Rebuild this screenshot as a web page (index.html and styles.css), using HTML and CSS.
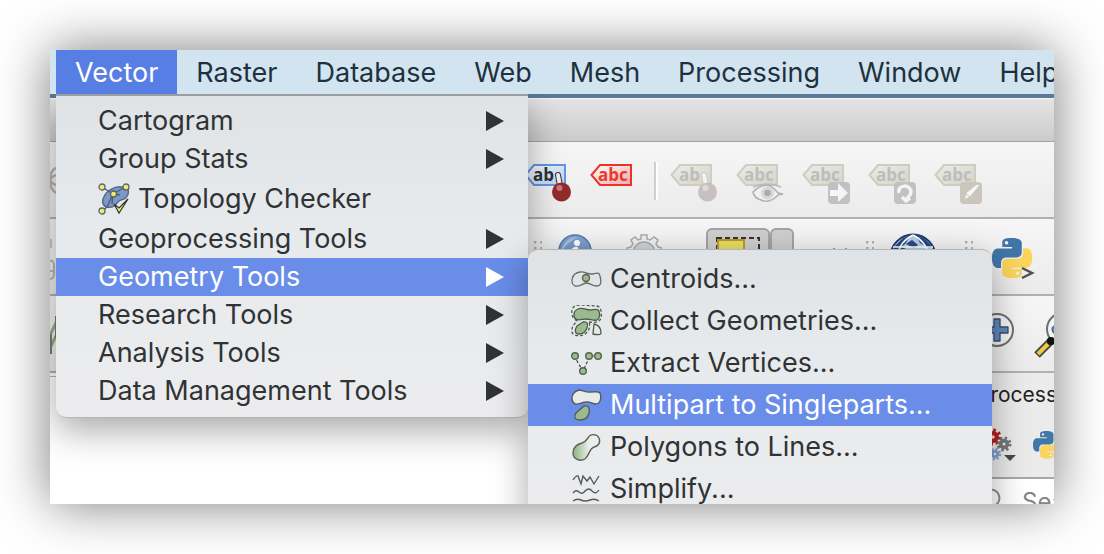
FILE: index.html
```html
<!DOCTYPE html>
<html lang="en">
<head>
<meta charset="utf-8">
<title>Vector menu</title>
<link rel="stylesheet" href="styles.css">
</head>
<body>
<svg class="defs" aria-hidden="true">
  <defs>
    <linearGradient id="g-blue" x2="1" y2="1"><stop stop-color="#fff"/><stop offset="1" stop-color="#b4cbee"/></linearGradient>
    <linearGradient id="g-red" x2="1" y2="1"><stop stop-color="#fff"/><stop offset="1" stop-color="#f3a9a9"/></linearGradient>
    <linearGradient id="g-grey" x2="1" y2="1"><stop stop-color="#ececea"/><stop offset="1" stop-color="#d5d4c8"/></linearGradient>
    <linearGradient id="g-poly"><stop offset=".1" stop-color="#9bbb8f"/><stop offset=".6" stop-color="#eceded"/></linearGradient>
    <linearGradient id="g-info" y2="1" x2="0"><stop stop-color="#86a5d0"/><stop offset="1" stop-color="#5e83b8"/></linearGradient>
    <path id="snake" d="M14.25.18l.9.2.73.26.59.3.45.32.34.34.25.34.16.33.1.3.04.26.02.2-.01.13V8.5l-.05.63-.13.55-.21.46-.26.38-.3.31-.33.25-.35.19-.35.14-.33.1-.3.07-.26.04-.21.02H8.77l-.69.05-.59.14-.5.22-.41.27-.33.32-.27.35-.2.36-.15.37-.1.35-.07.32-.04.27-.02.21v3.06H3.17l-.21-.03-.28-.07-.32-.12-.35-.18-.36-.26-.36-.36-.35-.46-.32-.59-.28-.73-.21-.88-.14-1.05-.05-1.23.06-1.22.16-1.04.24-.87.32-.71.36-.57.4-.44.42-.33.42-.24.4-.16.36-.1.32-.05.24-.01h.16l.06.01h8.16v-.83H6.18l-.01-2.75-.02-.37.05-.34.11-.31.17-.28.25-.26.31-.23.38-.2.44-.18.51-.15.58-.12.64-.1.71-.06.77-.04.84-.02 1.27.05zm-6.3 1.98l-.23.33-.08.41.08.41.23.34.33.22.41.09.41-.09.33-.22.23-.34.08-.41-.08-.41-.23-.33-.33-.22-.41-.09-.41.09z"/>
    <g id="python"><use href="#snake" fill="#4076a8"/><use href="#snake" fill="#fbd45c" transform="rotate(180 12 12)"/></g>
    <path id="tag" d="M1.5 13 10 3H41V23H10Z" stroke-width="2"/>
    <g id="greytag"><use href="#tag" fill="url(#g-grey)" stroke="#cfccc0"/></g>
    <path id="badge" d="M30 20h14q4 0 4 4v14q0 4-4 4H30q-4 0-4-4V24q0-4 4-4z"/>
    <g id="teeth"><circle r="4.500" fill="none" stroke="currentColor" stroke-width="5"/><circle r="8" fill="none" stroke="currentColor" stroke-width="4" stroke-dasharray="3.140 3.140"/></g>
  </defs>
</svg>

<div class="window">
  <nav class="menubar" aria-label="Application menu">
    <div class="menubar-entry">
      <button class="menubar-item active" aria-expanded="true">Vector</button>
      <ul class="menu vector-menu">
        <li><button class="menu-item">Cartogram<span class="arrow"></span></button></li>
        <li><button class="menu-item">Group Stats<span class="arrow"></span></button></li>
        <li><button class="menu-item with-icon">
          <svg width="32" height="32" viewBox="0 0 32 32"><path d="M6 14C8 8 17 3 23 4c3 0 6-2 7 1 1 5 0 9-4 11-4 1-5 1-7 4-3 4-6 5-10 4-5-1-5-7-3-10z" fill="#7e98c5" stroke="#596b87" stroke-width="1.5"/><path d="M4 4l11 7 12-7M15 11 9 24 4 28M15 11l-1 10M15 11l7 1" fill="none" stroke="#4e5e76" stroke-width="1.4"/><g fill="#f4ec62" stroke="#56657a" stroke-width="1.3"><circle cx="4" cy="4" r="3"/><circle cx="28" cy="4" r="3"/><circle cx="15.500" cy="11" r="3"/><circle cx="4" cy="28" r="3"/></g><path d="M16 21l5 4 9-9-9 14z" fill="#f4ec62" stroke="#30343a" stroke-width="1.2"/></svg>
          Topology Checker</button></li>
        <li><button class="menu-item">Geoprocessing Tools<span class="arrow"></span></button></li>
        <li class="submenu-host"><button class="menu-item selected" aria-expanded="true">Geometry Tools<span class="arrow"></span></button>
          <ul class="menu geometry-menu">
            <li><button class="menu-item with-icon">
              <svg width="31" height="32" viewBox="0 0 31 32"><path d="M9 9c4-1 7 2 11 2 4 0 8-3 9 2 2 8 0 10-3 10-5 0-7-3-11-3-4 1-7 4-11 3C-1 21 0 10 9 9z" fill="none" stroke="#666b68" stroke-width="1.3"/><circle cx="15" cy="15" r="3.500" fill="#9bbb8f" stroke="#53614f" stroke-width="1.4"/></svg>
              Centroids...</button></li>
            <li><button class="menu-item with-icon">
              <svg width="31" height="32" viewBox="0 0 31 32"><g stroke="#4c5b4b" stroke-width="1.3"><path d="M7 4c4-2 8 1 12 1s8-2 9 1 1 8-2 9-7-1-11-1-7 2-10 0S2 6 7 4z" fill="#9bbb8f"/><path d="M12 17c5-1 5 3 4 6s-4 6-8 6c-5 0-4-5-2-8z" fill="#9bbb8f"/><path d="M23 19c5 1 7 4 7 9 0 2-4 2-8 1z" fill="none"/><path d="M18 17c6 1 11 0 12-4 1-6 0-11-4-12-5 0-9-1-17-1C3 0 0 3 1 9c0 4 3 5 5 7-4 4-7 9-4 13 5 3 12 2 15-3 2-3 2-6 1-9z" fill="none" stroke-dasharray="3 2"/></g></svg>
              Collect Geometries...</button></li>
            <li><button class="menu-item with-icon">
              <svg width="31" height="32" viewBox="0 0 31 32"><path d="M3 9l9 15 7-15" fill="none" stroke="#4c514c" stroke-width="1.3" stroke-dasharray="3 2"/><path d="M19 9h9" stroke="#4c514c"/><g fill="#9bbb8f" stroke="#53614f" stroke-width="1.4"><circle cx="4" cy="9" r="3.300"/><circle cx="18" cy="9" r="3.300"/><circle cx="27" cy="9" r="3.300"/><circle cx="12" cy="24" r="3.300"/></g></svg>
              Extract Vertices...</button></li>
            <li><button class="menu-item with-icon selected">
              <svg width="31" height="32" viewBox="0 0 31 32"><g stroke="#555c60" stroke-width="1.4"><path d="M8 1c4 0 7 3 12 2 4 0 7-1 9 1 2 5 0 11-4 11s-6-3-10-2c-4 0-7 3-11 2C-1 12 0 3 8 1z" fill="#e9eaea"/><path d="M13 17c5-1 6 3 5 7-1 4-4 7-9 7-6 0-6-4-4-7z" fill="#9bbb8f"/></g></svg>
              Multipart to Singleparts...</button></li>
            <li><button class="menu-item with-icon">
              <svg width="31" height="32" viewBox="0 0 31 32"><path d="M17 7c2-5 9-4 11 0 2 5-1 8-5 9-5 2-5 9-9 12-5 3-12 0-12-6 0-6 5-9 9-10 3-1 4-2 6-5z" fill="url(#g-poly)" stroke="#5c645c" stroke-width="1.4"/></svg>
              Polygons to Lines...</button></li>
            <li><button class="menu-item with-icon">
              <svg width="31" height="32" viewBox="0 0 31 32"><path d="M2 7q3-5 5-4l3 8 2-8 4 5 3-4 4 7 5-8M2 20q3-4 6-1 3 3 6-1 4-4 7 0 4 4 7-1M2 28q4-3 8-1t9 0q5-2 9 1" fill="none" stroke="#565b5f" stroke-width="1.4"/></svg>
              Simplify...</button></li>
          </ul>
        </li>
        <li><button class="menu-item">Research Tools<span class="arrow"></span></button></li>
        <li><button class="menu-item">Analysis Tools<span class="arrow"></span></button></li>
        <li><button class="menu-item">Data Management Tools<span class="arrow"></span></button></li>
      </ul>
    </div>
    <button class="menubar-item">Raster</button>
    <button class="menubar-item">Database</button>
    <button class="menubar-item">Web</button>
    <button class="menubar-item">Mesh</button>
    <button class="menubar-item">Processing</button>
    <button class="menubar-item">Window</button>
    <button class="menubar-item">Help</button>
  </nav>

  <div class="titlebar"></div>

  <div class="toolbar">
    <svg class="edge" width="6" height="76" viewBox="0 0 6 76"><path d="M6 26Q1 28 0 36M6 33Q2 34 0 38M6 43Q2 42 0 38M6 51Q1 48 0 41" fill="none" stroke="#b5b2b0" stroke-width="2.500"/></svg>
    <div class="tools label-tools">
      <button class="tool" aria-label="Pin labels"><svg width="50" height="42" viewBox="0 0 50 42"><use href="#tag" fill="url(#g-blue)" stroke="#6096e8"/><text class="tag-text" x="9" y="19" fill="#2b3438">ab</text><path d="M34 13l2 11" stroke="#333" stroke-width="6" stroke-linecap="round"/><path d="M34 13l2 11" stroke="#eee" stroke-width="4" stroke-linecap="round"/><circle cx="37.500" cy="30" r="9.500" fill="#922c2b"/><circle cx="35.500" cy="26" r="3" fill="#cf7775"/></svg></button>
      <button class="tool" aria-label="Unplaced labels"><svg width="50" height="42" viewBox="0 0 50 42"><use href="#tag" fill="url(#g-red)" stroke="#ee3326"/><text class="tag-text" x="8" y="19" fill="#e83a2c">abc</text></svg></button>
      <span class="divider"></span>
      <button class="tool" aria-label="Pin or unpin labels"><svg width="50" height="42" viewBox="0 0 50 42"><use href="#greytag"/><text class="tag-text" x="9" y="19" fill="#bdbdbb">ab</text><path d="M34 13l2 11" stroke="#c8c6c5" stroke-width="6" stroke-linecap="round"/><path d="M34 13l2 11" stroke="#f3f3f3" stroke-width="4" stroke-linecap="round"/><circle cx="37.500" cy="30" r="9.500" fill="#c8c0c0"/><circle cx="35.500" cy="26" r="3" fill="#ddd9d9"/></svg></button>
      <button class="tool" aria-label="Show or hide labels"><svg width="50" height="42" viewBox="0 0 50 42"><use href="#greytag"/><text class="tag-text" x="8" y="19" fill="#bdbdbb">abc</text><path d="M17 30Q31 16 42 31l5 1-5 1Q34 42 25 38 18 36 17 30z" fill="#f0f0f0" stroke="#b2b2b2" stroke-width="1.6"/><path d="M17 25q14-6 28 0" fill="none" stroke="#b9b9b9" stroke-width="1.5"/><circle cx="31.500" cy="31" r="6.500" fill="#d6d8dc"/><circle cx="31.500" cy="31" r="3.300" fill="#a8abae"/></svg></button>
      <button class="tool" aria-label="Move label"><svg width="50" height="42" viewBox="0 0 50 42"><use href="#greytag"/><text class="tag-text" x="8" y="19" fill="#bdbdbb">abc</text><use href="#badge" fill="#bfc1c3"/><path d="M28 28h8v-7l10 10-10 9v-6h-8z" fill="#f5f5f5"/></svg></button>
      <button class="tool" aria-label="Rotate label"><svg width="50" height="42" viewBox="0 0 50 42"><use href="#greytag"/><text class="tag-text" x="8" y="19" fill="#bdbdbb">abc</text><use href="#badge" fill="#bfc1c3"/><path d="M31 31c-2-9 12-9 12-1 0 4-4 5-5 8m-4-3 4 4 4-3" fill="none" stroke="#f4f4f4" stroke-width="3.500"/></svg></button>
      <button class="tool" aria-label="Change label"><svg width="50" height="42" viewBox="0 0 50 42"><use href="#greytag"/><text class="tag-text" x="8" y="19" fill="#bdbdbb">abc</text><use href="#badge" fill="#cac6be"/><path d="M46 23 36 35l-6 3 2-7 11-9zM31 31l5 4" fill="#f6f6f4" stroke="#cac6be"/></svg></button>
    </div>
  </div>

  <div class="toolbar">
    <svg class="edge" width="6" height="76" viewBox="0 0 6 76"><path d="M0 20h2v9H0z" fill="#c5c5c5"/><path d="M0 42q4-1 4 5v7q0 6-4 6M0 52h4" fill="none" stroke="#b6b6b6" stroke-width="2"/></svg>
    <div class="tools attribute-tools">
      <span class="grip"></span>
      <button class="tool" aria-label="Identify"><svg width="36" height="42" viewBox="0 0 36 42"><circle cx="18" cy="18" r="16" fill="url(#g-info)" stroke="#557aab" stroke-width="1.5"/><path d="M4 17Q9 4 20 4q-8 5-15 13z" fill="#a6bddd"/><circle cx="20" cy="10" r="3" fill="#fff"/><path d="M15 18q5-5 5 0l-2 9q0 3 4 0" fill="none" stroke="#fff" stroke-width="3.500"/></svg></button>
      <button class="tool gear" aria-label="Actions"><svg width="36" height="42" viewBox="0 0 36 42"><path d="M1 20v-5l4-1 2-3-2-4 4-3 3 3 3-1V2h6v4l3 1 4-3 4 3-2 4 2 3 4 1v5l-4 2 1 4-5 5-10 3-10-3-5-5 1-4z" fill="#f0f0f0" stroke="#aaa" stroke-width="1.5"/><circle cx="18" cy="20" r="11" fill="#d2d3d4" stroke="#aaa" stroke-width="1.5"/></svg></button>
      <span class="select-group">
        <button class="select-box" aria-label="Select features"><svg width="46" height="30" viewBox="0 0 46 30"><rect x="2" y="1" width="42" height="28" fill="none" stroke="#333" stroke-width="2" stroke-dasharray="5 3"/><rect x="3" y="3" width="26" height="25" fill="#eadd61" stroke="#bd9b27" stroke-width="2"/></svg></button><button class="select-more" aria-label="More selections"></button>
      </span>
      <svg class="chevrons" width="18" height="42" viewBox="0 0 18 42"><path d="M2 18l5 5M16 18l-5 5" stroke="#4a4a4a" stroke-width="3"/></svg>
      <span class="grip"></span>
      <button class="tool" aria-label="Metasearch"><svg width="48" height="48" viewBox="0 0 48 48"><circle cx="24" cy="24" r="22.500" fill="#b2cbe8" stroke="#1f3c6a" stroke-width="2"/><path d="M5 14 14 5l7-3-4 8-9 8-6 4zM27 2l8 3 9 9-4 1-9-5zM17 11l6-4 6 5-4 3zM34 17l10-1 2 9-12-4zM3 20l10-6 4 2-4 8-11 3z" fill="#27487f"/><path d="M24 2Q9 9 8 27M24 2q15 7 16 25M4 14h40" fill="none" stroke="#fff" stroke-width="1.500"/></svg></button>
      <span class="grip last"></span>
      <button class="tool" aria-label="Python console"><svg width="48" height="48" viewBox="0 0 48 48"><use href="#python" transform="translate(4 5) scale(1.670)"/><path d="m34 35 10 5-10 5" fill="none" stroke="#505050" stroke-width="2.500"/></svg></button>
    </div>
  </div>

  <div class="toolbar">
    <svg class="edge" width="6" height="76" viewBox="0 0 6 76"><path d="M0 52 6 40M0 39l6-12" stroke="#8cb37f" stroke-width="3"/><path d="M1 38v20M6 20v22" stroke="#7b7b7b" stroke-width="2"/></svg>
    <div class="tools zoom-tools">
      <button class="tool" aria-label="Zoom in"><svg width="36" height="36" viewBox="0 0 36 36"><circle cx="18" cy="18" r="16" fill="#f4f4f4" stroke="#6f6f6f" stroke-width="2"/><path d="M15 7h6v8h8v6h-8v8h-6v-8H7v-6h8z" fill="#6288b9" stroke="#354f72" stroke-width="1.3" stroke-linejoin="round"/></svg></button>
      <button class="tool" aria-label="Zoom full"><svg width="48" height="46" viewBox="0 0 48 46"><circle cx="30" cy="17" r="16" fill="#f4f4f4" stroke="#6f6f6f" stroke-width="2"/><path d="M19 17q0-4 5-3v8q-5 0-5-5z" fill="#6288b9" stroke="#354f72"/><path d="M4 43 18 29" stroke="#484848" stroke-width="8"/><path d="M5 42l10-10" stroke="#f1ca40" stroke-width="4"/><circle cx="18" cy="29" r="4" fill="#111"/></svg></button>
    </div>
  </div>

  <main class="workspace">
    <div class="canvas"></div>
    <aside class="dock">
      <h2 class="dock-title">Processing Toolbox</h2>
      <div class="dock-tools">
        <button class="tool" aria-label="Models"><svg width="36" height="36" viewBox="0 0 36 36"><g transform="translate(13 10) scale(.850)" color="#b92020"><use href="#teeth"/></g><g transform="translate(24 17) scale(.750)" color="#777"><use href="#teeth"/></g><g transform="translate(15 27) scale(.620)" color="#849fd1"><use href="#teeth"/></g><path d="M24 28h12l-6 6z" fill="#4a4a4a"/></svg></button>
        <button class="tool" aria-label="Scripts"><svg width="28" height="36" viewBox="0 0 28 36"><use href="#python" transform="translate(0 4) scale(1.150)"/></svg></button>
      </div>
      <label class="search">
        <svg width="26" height="26" viewBox="0 0 26 26"><circle cx="15" cy="13" r="8.500" fill="none" stroke="#8b8b8b" stroke-width="2"/><path d="m9 19-6 6" stroke="#8b8b8b" stroke-width="2"/></svg>
        <input type="search" placeholder="Search…" aria-label="Search">
      </label>
    </aside>
  </main>
</div>
</body>
</html>
```

FILE: styles.css
```css
* {
  box-sizing: border-box;
}

body {
  margin: 0;
  padding: 50px;
  height: 100vh;
  overflow: hidden;
  background: #fff;
  font-family: Inter, "Liberation Sans", sans-serif;
  color: #303335;
}

button {
  margin: 0;
  padding: 0;
  border: 0;
  background: none;
  color: inherit;
  font: inherit;
  text-align: left;
}

ul {
  margin: 0;
  padding: 0;
  list-style: none;
}

svg {
  display: block;
  flex: none;
}

.defs {
  position: absolute;
  width: 0;
  height: 0;
}

.window {
  display: flex;
  flex-direction: column;
  height: 100%;
  overflow: hidden;
  background: #fff;
  box-shadow: 0 0 50px rgba(0, 0, 0, 0.52);
}

/* Menu bar */

.menubar {
  position: relative;
  z-index: 2;
  display: flex;
  flex: none;
  height: 48px;
  padding-left: 6px;
  border-bottom: 4px solid #5c7998;
  background: #d2e4f0;
  color: #20313e;
  font-size: 27px;
}

.menubar-entry {
  position: relative;
  display: flex;
}

.menubar-item {
  flex: none;
  padding: 2px 19px 0;
  line-height: 42px;
}

.menubar-item.active {
  background: #577ee4;
  color: #fff;
}

/* Drop-down menus */

.menu {
  position: absolute;
  border: 1px solid #b4b6b8;
  background: linear-gradient(#dfe3e5, #e7eaec 40%, #ececee);
  box-shadow: 0 12px 36px rgba(0, 0, 0, 0.35);
  color: #303335;
}

.vector-menu {
  top: 100%;
  left: 0;
  width: 472px;
  padding: 6px 0 7px;
  border-top: 2px solid #999da0;
  border-width: 2px 0 1px;
  border-radius: 0 0 10px 10px;
  clip-path: inset(0 -600px -600px -600px);
}

.geometry-menu {
  top: -9px;
  left: 100%;
  width: 464px;
  padding: 8px 0;
  border-width: 1px 0;
  border-radius: 10px;
}

.submenu-host {
  position: relative;
}

.menu-item {
  display: flex;
  align-items: center;
  justify-content: space-between;
  width: 100%;
  padding: 0 24px 0 42px;
  line-height: 38px;
  white-space: nowrap;
}

.menu-item.with-icon {
  justify-content: flex-start;
  gap: 8px;
  line-height: 42px;
}

.geometry-menu .menu-item {
  padding-left: 43px;
}

.menu-item.selected {
  background: #698de9;
  color: #fff;
}

.arrow {
  border-left: 18px solid currentColor;
  border-top: 10px solid transparent;
  border-bottom: 10px solid transparent;
}

/* Window chrome */

.titlebar {
  flex: none;
  height: 44px;
  border-top: 1px solid #f6f6f6;
  border-bottom: 1px solid #a2a2a2;
  background: linear-gradient(#e4e4e4, #cbcbcb);
}

.toolbar {
  display: flex;
  flex: none;
  height: 77px;
  border-bottom: 2px solid #b0b0b0;
  background: linear-gradient(#f6f6f6, #ebebeb);
}

.tools {
  display: flex;
  align-items: flex-start;
}

.tool {
  flex: none;
}

.label-tools {
  padding: 20px 0 0 468px;
}

.label-tools .tool {
  width: 66px;
}

.tag-text {
  font: bold 17px "Open Sans", sans-serif;
}

.divider {
  width: 16px;
  height: 38px;
  margin-left: -2px;
  border-left: 2px solid #cfcfcf;
  box-shadow: inset 2px 0 #fff;
}

.grip {
  flex: none;
  width: 8px;
  height: 24px;
  margin-top: 22px;
  background: radial-gradient(circle at 1px 1px, #b2b2b2 1px, transparent 2px) 0 0 / 6px 6px;
}

.grip.last {
  margin-left: 28px;
}

.attribute-tools {
  padding: 0 0 0 478px;
}

.attribute-tools .tool {
  margin: 14px 0 0 15px;
}

.attribute-tools .gear {
  margin-left: 33px;
}

.select-group {
  display: flex;
  margin: 9px 0 0 44px;
}

.select-box,
.select-more {
  height: 48px;
  border: 2px solid #a3a3a3;
  border-radius: 6px;
  background: #cfcfcf;
}

.select-box {
  width: 64px;
  padding: 0 7px;
}

.select-more {
  width: 24px;
}

.chevrons {
  margin: 12px 17px 0 37px;
}

.zoom-tools {
  gap: 18px;
  padding: 16px 0 0 923px;
}

.workspace {
  display: flex;
  flex: 1;
  min-height: 0;
  overflow: hidden;
}

.canvas {
  flex: 1;
  margin-top: 3px;
  border-top: 1px solid #b5b5b5;
  background: #fff;
}

.dock {
  flex: none;
  width: 94px;
  overflow: hidden;
  background: #ebebeb;
}

.dock-title {
  margin: 0;
  padding-left: 17px;
  color: #222;
  font-size: 21px;
  font-weight: 400;
  line-height: 44px;
  white-space: nowrap;
}

.dock-tools {
  display: flex;
  align-items: flex-start;
  gap: 17px;
  height: 62px;
  padding: 10px 0 0 20px;
  border-bottom: 2px solid #a8a8a8;
}

.search {
  display: flex;
  gap: 20px;
  padding: 6px 0 0 16px;
  background: #fff;
}

.search input {
  width: 200px;
  height: 32px;
  padding: 0;
  border: 0;
  background: none;
  font: 24px Inter, sans-serif;
}

.search input::placeholder {
  color: #858585;
}
```
